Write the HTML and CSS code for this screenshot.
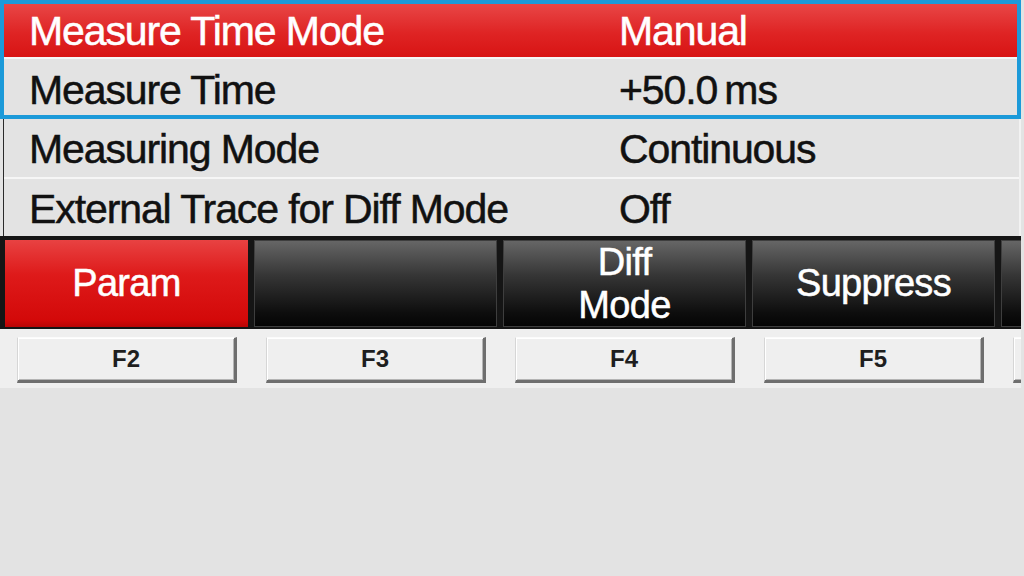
FILE: index.html
```html
<!DOCTYPE html>
<html lang="en">
<head>
<meta charset="utf-8">
<title>Measure Time Settings</title>
<link rel="stylesheet" href="styles.css">
</head>
<body>
<div class="screen">
  <div class="focus">
    <div class="row sel"><span class="lbl">Measure Time Mode</span><span class="val">Manual</span></div>
    <div class="row r2"><span class="lbl">Measure Time</span><span class="val">+50.0&thinsp;ms</span></div>
  </div>
  <div class="rows">
    <div class="row r3"><span class="lbl">Measuring Mode</span><span class="val">Continuous</span></div>
    <div class="row r4"><span class="lbl">External Trace for Diff Mode</span><span class="val">Off</span></div>
  </div>
  <div class="softkeys">
    <div class="sk red">Param</div>
    <div class="sk dark"></div>
    <div class="sk dark">Diff<br>Mode</div>
    <div class="sk dark">Suppress</div>
    <div class="sk dark"></div>
  </div>
  <div class="fkeys">
    <div class="fk">F2</div>
    <div class="fk">F3</div>
    <div class="fk">F4</div>
    <div class="fk">F5</div>
    <div class="fk"></div>
  </div>
</div>
</body>
</html>
```
FILE: styles.css
```css
html, body {
  margin: 0;
  padding: 0;
  background: #e3e3e3;
}

.screen {
  width: 1021px;
  overflow: hidden;
  font-family: "Liberation Sans", Arial, sans-serif;
  background: #e3e3e3;
}

.focus {
  border: 4px solid #1c9ad9;
}

.row {
  box-sizing: border-box;
  display: grid;
  grid-template-columns: 590px 1fr;
  padding-left: 25px;
  font-size: 41px;
  letter-spacing: -1.1px;
  line-height: 46px;
  color: #111;
  background: #e3e3e3;
  white-space: nowrap;
  -webkit-text-stroke: 0.5px currentColor;
}

.row.sel {
  height: 53px;
  padding-top: 4px;
  color: #fff;
  background: linear-gradient(#e84646, #df2424 55%, #d81414);
}

.row.r2 {
  height: 58px;
  padding-top: 8px;
  border-top: 2px solid #f6f6f6;
}

.rows {
  margin-left: 3px;
  border-left: 1px solid #2a2a2a;
  border-right: 2px solid #f2f2f2;
}

.row.r3 {
  height: 58px;
  padding-top: 7px;
}

.row.r4 {
  height: 59px;
  padding-top: 7px;
  border-top: 2px solid #f6f6f6;
}

.softkeys {
  display: flex;
  gap: 6px;
  height: 93px;
  box-sizing: border-box;
  padding: 4px 0 2px 5px;
  background: #151515;
}

.sk {
  box-sizing: border-box;
  flex: none;
  width: 243px;
  height: 87px;
  display: flex;
  align-items: center;
  justify-content: center;
  text-align: center;
  color: #fff;
  font-size: 38px;
  letter-spacing: -0.7px;
  line-height: 43px;
  -webkit-text-stroke: 0.5px currentColor;
}

.sk.red {
  background: linear-gradient(#e84242, #de1a1a 40%, #d30909 92%, #b80606);
}

.sk.dark {
  border: 1px solid #3e3e3e;
  background: linear-gradient(#666666, #363636 40%, #0d0d0d 85%, #050505);
}

.fkeys {
  display: flex;
  gap: 29px;
  height: 59px;
  box-sizing: border-box;
  padding: 8px 0 5px 17px;
  background: #efefef;
}

.fk {
  box-sizing: border-box;
  flex: none;
  width: 220px;
  height: 46px;
  display: flex;
  align-items: center;
  justify-content: center;
  background: #efefef;
  border-top: 1px solid #fbfbfb;
  border-left: 1px solid #d6d6d6;
  border-right: 3px solid #6e6e6e;
  border-bottom: 3px solid #6e6e6e;
  box-shadow: inset 1px 1px 0 #ffffff, inset -1px -1px 0 #b4b4b4;
  font-size: 24px;
  font-weight: bold;
  color: #1e1e1e;
}
```
